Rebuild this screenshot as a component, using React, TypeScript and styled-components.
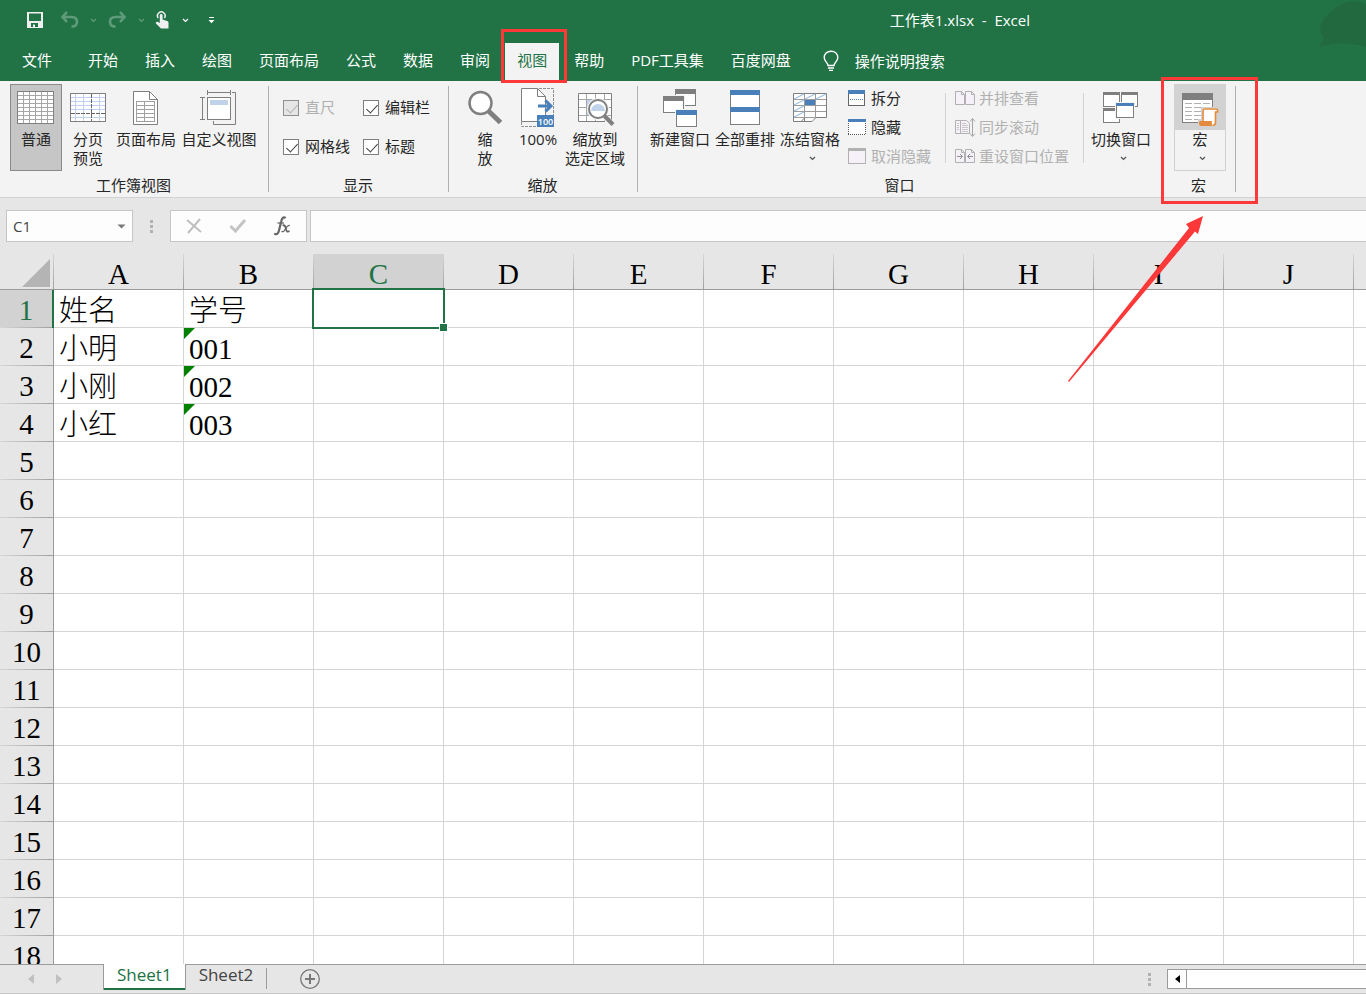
import React from "react";
import styled, { createGlobalStyle, css } from "styled-components";

const GREEN = "#217346";
const RED = "#fc3838";
const GRAY = "#7f7f7f";
const BLUE = "#4a80b9";
const PALE = "#c0d3ea";

const GlobalStyle = createGlobalStyle`
  * { box-sizing: border-box; }
  body {
    margin: 0;
    font-family: "Open Sans", "Noto Sans CJK SC", sans-serif;
    font-size: 15px;
    line-height: 19px;
    color: #262626;
  }
  button, input { font: inherit; color: inherit; }
  button { border: 0; padding: 0; background: none; }
  svg { display: block; flex: none; }
`;

const Window = styled.div`
  position: relative;
  display: flex;
  flex-direction: column;
  height: 100vh;
  overflow: hidden;
  background: #e6e6e6;
`;

/* ---------- title bar and tabs ---------- */

const Header = styled.header`
  position: relative;
  flex: none;
  background: ${GREEN};
  color: #fff;
`;

const TitleBar = styled.div`
  display: flex;
  align-items: center;
  height: 40px;
  padding-left: 24px;
`;

const QuickButton = styled.button<{ $w: number; $dim?: boolean }>`
  display: flex;
  align-items: center;
  justify-content: center;
  width: ${(p) => p.$w}px;
  height: 24px;
  opacity: ${(p) => (p.$dim ? 0.28 : 1)};
`;

const Title = styled.h1`
  margin: 0 336px 0 auto;
  font-size: 15px;
  font-weight: 400;
  white-space: pre;
`;

const Bubble = styled.svg`
  position: absolute;
  top: 0;
  right: 0;
`;

const Tabs = styled.nav`
  display: flex;
  align-items: flex-end;
  gap: 3px;
  height: 41px;
  padding-left: 10px;
`;

const Tab = styled.button<{ $active?: boolean; $file?: boolean }>`
  position: relative;
  height: 38px;
  padding: 0 12px 3px;
  white-space: nowrap;
  ${(p) => p.$file && css`margin-right: 9px;`}
  ${(p) => p.$active && css`background: #f3f3f3; color: ${GREEN};`}
`;

const TellMe = styled.button`
  display: flex;
  align-items: center;
  gap: 16px;
  height: 38px;
  margin-left: 17px;
  padding-bottom: 2px;
`;

const TabMark = styled.span`
  position: absolute;
  inset: -14px -8px -2px -4px;
  border: 3px solid ${RED};
  z-index: 3;
`;

/* ---------- ribbon ---------- */

const Ribbon = styled.div`
  display: flex;
  flex: none;
  height: 117px;
  padding-top: 3px;
  background: #f3f3f3;
  border-bottom: 1px solid #d2d2d2;
`;

const Group = styled.section<{ $w: number; $pad: number }>`
  position: relative;
  flex: none;
  width: ${(p) => p.$w}px;
  &::after {
    content: "";
    position: absolute;
    top: 2px;
    right: 0;
    width: 1px;
    height: 106px;
    background: #b1b1b1;
  }
  > div { padding-left: ${(p) => p.$pad}px; }
`;

const GroupBody = styled.div`
  display: flex;
  height: 87px;
`;

const GroupName = styled.h2`
  margin: 4px 0 0;
  padding-right: 2px;
  font-size: 15px;
  font-weight: 400;
  line-height: 20px;
  text-align: center;
`;

const BigButton = styled.button<{ $w: number; $state?: "on" | "hover" }>`
  display: flex;
  flex-direction: column;
  align-items: center;
  flex: none;
  width: ${(p) => p.$w}px;
  height: 87px;
  white-space: pre;
  ${(p) => p.$state === "on" && css`background: #c6c6c6; box-shadow: inset 0 0 0 1px #8a8a8a;`}
  ${(p) => p.$state === "hover" && css`box-shadow: inset 0 0 0 1px #d0d0d0;`}
`;

const IconSlot = styled.span<{ $shade?: boolean }>`
  display: flex;
  align-items: center;
  justify-content: center;
  width: 100%;
  height: 46px;
  background: ${(p) => (p.$shade ? "#d2d2d2" : "transparent")};
`;

const ChevronRow = styled.span`
  display: flex;
  align-items: center;
  height: 19px;
  padding-left: 4px;
`;

const Checks = styled.div`
  display: grid;
  grid-template-columns: 80px 1fr;
  grid-auto-rows: 39px;
  height: 87px;
  padding-top: 4px;
`;

const CheckLabel = styled.label<{ $off?: boolean }>`
  display: flex;
  align-items: center;
  gap: 6px;
  white-space: nowrap;
  color: ${(p) => (p.$off ? "#b1b1b1" : "inherit")};
`;

const CheckBox = styled.input`
  appearance: none;
  position: relative;
  width: 16px;
  height: 16px;
  margin: 0;
  border: 1px solid #7f7f7f;
  background: #fff;
  &::after {
    content: "";
    position: absolute;
    left: 5px;
    top: 1px;
    width: 5px;
    height: 10px;
    border: solid #404040;
    border-width: 0 1px 1px 0;
    transform: rotate(43deg);
  }
  &:disabled { background: #e6e6e6; border-color: #8f8f8f; }
  &:disabled::after { border-color: #b1b1b1; }
`;

const SmallColumn = styled.div<{ $w: number }>`
  flex: none;
  width: ${(p) => p.$w}px;
`;

const SmallButton = styled.button<{ $gap: number }>`
  display: flex;
  align-items: center;
  gap: ${(p) => p.$gap}px;
  height: 29px;
  white-space: nowrap;
  &:disabled { color: #b1b1b1; }
`;

const InnerRule = styled.span`
  flex: none;
  width: 1px;
  height: 70px;
  margin: 9px 9px 0 0;
  background: #d2d2d2;
`;

const MacroMark = styled.span`
  position: absolute;
  inset: -7px -22px -7px -2px;
  border: 3px solid ${RED};
  z-index: 3;
`;

/* ---------- formula bar ---------- */

const FormulaBar = styled.div`
  display: flex;
  align-items: center;
  flex: none;
  height: 56px;
  padding-left: 6px;
`;

const NameBox = styled.div`
  display: flex;
  align-items: center;
  width: 127px;
  height: 32px;
  padding-right: 6px;
  border: 1px solid #c6c6c6;
  background: #fdfdfd;
  color: #444;
  input {
    flex: 1;
    min-width: 0;
    padding: 0 0 0 6px;
    border: 0;
    background: none;
  }
`;

const Grip = styled.span`
  display: flex;
  flex-direction: column;
  gap: 2px;
  width: 3px;
  margin: 0 17px;
  i { height: 3px; background: #b1b1b1; }
`;

const FormulaTools = styled.div`
  display: flex;
  align-items: center;
  width: 137px;
  height: 32px;
  padding-left: 1px;
  border: 1px solid #c6c6c6;
  background: #fdfdfd;
  button { display: flex; justify-content: center; width: 44px; }
`;

const FormulaInput = styled.input`
  flex: 1;
  min-width: 0;
  height: 32px;
  margin-left: 3px;
  border: 1px solid #c6c6c6;
  border-right: 0;
  background: #fdfdfd;
`;

/* ---------- sheet ---------- */

const SheetArea = styled.main`
  flex: 1;
  min-height: 0;
  overflow: hidden;
  background: #fff;
`;

const Grid = styled.table`
  width: 100%;
  table-layout: fixed;
  border-collapse: separate;
  border-spacing: 0;
  font-family: "Liberation Serif", "Noto Sans CJK SC", serif;
  font-size: 29px;
  font-weight: 300;
  line-height: 32px;
  color: #000;
  th { font-weight: 400; }
`;

const ColHead = styled.th<{ $on?: boolean }>`
  height: 36px;
  padding: 5px 1px 0 0;
  border-bottom: 1px solid #9b9b9b;
  line-height: 30px;
  background: linear-gradient(#d6d6d6, #a0a0a0) right / 1px 100% no-repeat
    ${(p) => (p.$on ? "#d2d2d2" : "#e6e6e6")};
  color: ${(p) => (p.$on ? GREEN : "inherit")};
  &:last-child { background: #e6e6e6; }
`;

const Corner = styled(ColHead)`
  padding: 2px 4px 0 0;
  svg { margin-left: auto; }
`;

const RowHead = styled.th<{ $on?: boolean }>`
  height: 38px;
  padding: 2px 0 0;
  border-right: ${(p) => (p.$on ? `2px solid ${GREEN}` : "1px solid #9b9b9b")};
  background: linear-gradient(90deg, #d6d6d6, #a0a0a0) bottom / 100% 1px no-repeat
    ${(p) => (p.$on ? "#d2d2d2" : "#e6e6e6")};
  color: ${(p) => (p.$on ? GREEN : "inherit")};
`;

const Cell = styled.td<{ $flag?: boolean }>`
  position: relative;
  height: 38px;
  padding: 5px 0 0 5px;
  border-right: 1px solid #d4d4d4;
  border-bottom: 1px solid #d4d4d4;
  white-space: nowrap;
  &:last-child { border-right: 0; }
  ${(p) => p.$flag && css`
    &::before {
      content: "";
      position: absolute;
      top: 0;
      left: 0;
      width: 11px;
      height: 11px;
      background: #008000;
      clip-path: polygon(0 0, 100% 0, 0 100%);
    }
  `}
`;

const Selection = styled.span`
  position: absolute;
  inset: -2px;
  border: 2px solid ${GREEN};
  z-index: 1;
  &::after {
    content: "";
    position: absolute;
    right: -5px;
    bottom: -5px;
    width: 7px;
    height: 7px;
    border: 1px solid #fff;
    background: ${GREEN};
  }
`;

/* ---------- sheet tabs ---------- */

const Footer = styled.footer`
  display: flex;
  flex: none;
  height: 30px;
  border-top: 1px solid #9b9b9b;
  border-bottom: 1px solid #c6c6c6;
`;

const SheetNav = styled.div`
  display: flex;
  align-items: center;
  gap: 22px;
  width: 103px;
  padding-left: 28px;
`;

const SheetTab = styled.button<{ $active?: boolean }>`
  height: 25px;
  padding: 0 13px 5px;
  font-size: 17px;
  line-height: 20px;
  color: #444;
  ${(p) => p.$active && css`
    height: 26px;
    margin-top: -1px;
    padding-bottom: 4px;
    border: solid #9b9b9b;
    border-width: 0 1px;
    box-shadow: inset 0 -2px 0 ${GREEN};
    background: #fff;
    color: ${GREEN};
  `}
`;

const TabRule = styled.span`
  width: 1px;
  height: 21px;
  margin-top: 3px;
  background: #9b9b9b;
`;

const AddSheet = styled.button`
  margin-left: 32px;
`;

const ScrollBar = styled.div`
  display: flex;
  align-items: center;
  width: 235px;
  margin-left: auto;
`;

const ScrollButton = styled.button`
  display: flex;
  align-items: center;
  justify-content: center;
  width: 20px;
  height: 20px;
  margin-left: -1px;
  border: 1px solid #9b9b9b;
  background: #fdfdfd;
`;

const ScrollThumb = styled.span`
  flex: 1;
  height: 20px;
  border: solid #9b9b9b;
  border-width: 1px 0;
  background: #fff;
`;

const PointerArrow = styled.svg`
  position: absolute;
  left: 1068px;
  top: 216px;
  z-index: 4;
  pointer-events: none;
`;

/* ---------- icons ---------- */

const Chevron = ({ color = "#555" }: { color?: string }) => (
  <svg width="7" height="5" viewBox="0 0 7 5"><path d="M1 1l2.5 2.4L6 1" fill="none" stroke={color} strokeWidth="1.3" /></svg>
);

const Icon40 = ({ children }: { children: React.ReactNode }) => (
  <svg width="40" height="40" viewBox="0 0 40 40" fill="none" aria-hidden="true" overflow="visible">{children}</svg>
);

const hv = (xs: number[], ys: number[], x1: number, x2: number, y1: number, y2: number) =>
  xs.map((x) => `M${x} ${y1}V${y2}`).join("") + ys.map((y) => `M${x1} ${y}H${x2}`).join("");

const NormalIcon = () => (
  <Icon40>
    <rect x="1.5" y="4.5" width="36" height="32" fill="#fff" stroke={GRAY} />
    <path d={hv([7.5, 13.5, 19.5, 25.5, 31.5], [8.5, 12.5, 16.5, 20.5, 24.5, 28.5, 32.5], 2, 37, 5, 36)} stroke="#a6a6a6" />
  </Icon40>
);

const BreakIcon = () => (
  <Icon40>
    <rect x="2.5" y="6.5" width="35" height="28" fill="#fff" stroke={GRAY} />
    <path d={hv([7.5, 15.5, 31.5], [10.5, 14.5, 18.5, 22.5, 30.5], 3, 37, 7, 34)} stroke={PALE} />
    <path d="M23.5 7V34M3 26.5H37" stroke="#666" strokeDasharray="4 1" />
  </Icon40>
);

const PageIcon = () => (
  <Icon40>
    <path d="M7.5 4.5H23.5L31.5 12.5V37.5H7.5Z" fill="#fff" stroke={GRAY} />
    <path d="M23.5 4.5V12.5H31.5" stroke={GRAY} />
    <path d={hv([10.5, 18.5, 28.5], [14.5, 18.5, 22.5, 26.5, 30.5, 34.5], 10, 29, 14, 35)} stroke="#a0a0a0" />
  </Icon40>
);

const CustomIcon = () => (
  <Icon40>
    <rect x="8.5" y="10.5" width="23" height="22" fill="#fff" stroke={GRAY} />
    <path d="M11 13H29V18H11Z" fill={PALE} />
    <path d="M8.5 3V8M31.5 3V8M8 5.5H32M1 10.5H6M1 32.5H6M3.5 10V33M33 5.5H36.5V37.5H14.5V34" stroke={GRAY} />
  </Icon40>
);

const ZoomIcon = () => (
  <Icon40>
    <circle cx="15.5" cy="16" r="11" fill="#fff" stroke={GRAY} strokeWidth="2.5" />
    <path d="M23.5 24L35.5 35.5" stroke={GRAY} strokeWidth="5" />
  </Icon40>
);

const Zoom100Icon = () => (
  <Icon40>
    <path d="M21 1.5H35.5V28M3.5 35V39.5H19" stroke="#8f8f8f" strokeDasharray="3 1" />
    <path d="M3.5 1.5H19.5L27.5 9.5V34.5H3.5Z" fill="#fff" stroke={GRAY} />
    <path d="M19.5 1.5V9.5H27.5" stroke={GRAY} />
    <path d="M20 19H33M27.5 13.5L33 19L27.5 24.5" stroke={BLUE} strokeWidth="3" />
    <path d="M19 28H36V40H19Z" fill={BLUE} />
    <text x="27.5" y="37.5" fontSize="9" fontWeight="600" fill="#fff" textAnchor="middle">100</text>
  </Icon40>
);

const ZoomSelIcon = () => (
  <Icon40>
    <path d="M3.5 6.5H36.5V34.5H3.5Z" fill="#fff" stroke={GRAY} />
    <path d={hv([11.5, 20.5, 29.5], [12.5, 20.5, 28.5], 4, 36, 7, 34)} stroke="#a6a6a6" />
    <path d="M12 13H29V28H12Z" fill={PALE} />
    <circle cx="23" cy="22" r="11" fill="#f3f3f3" />
    <path d="M28 31L32 28L40 36V40H33Z" fill="#f3f3f3" />
    <circle cx="23" cy="22" r="9" fill="#fff" stroke={GRAY} strokeWidth="2" />
    <path d="M16 24A7 7 0 1 1 30 24Z" fill={PALE} />
    <path d="M29.5 29L38 37.5" stroke={GRAY} strokeWidth="4" />
  </Icon40>
);

const Win = ({ x, y, w, h, c, bar = 5 }: { x: number; y: number; w: number; h: number; c: string; bar?: number }) => (
  <g>
    <rect x={x - 1} y={y - 1} width={w + 2} height={h + 2} fill="#f3f3f3" />
    <rect x={x + 0.5} y={y + 0.5} width={w - 1} height={h - 1} fill="#fff" stroke={GRAY} />
    <rect x={x} y={y} width={w} height={bar} fill={c} />
  </g>
);

const NewWindowIcon = () => (
  <Icon40>
    <Win x={15} y={2} w={21} h={17} c={GRAY} />
    <Win x={3} y={9} w={21} h={17} c={GRAY} />
    <Win x={16} y={23} w={21} h={17} c={BLUE} />
  </Icon40>
);

const ArrangeIcon = () => (
  <Icon40>
    <Win x={5} y={3} w={30} h={18} c={BLUE} />
    <rect x="5.5" y="20.5" width="29" height="17" fill="#fff" stroke={GRAY} />
    <path d="M5 20H35V25H5Z" fill={BLUE} />
  </Icon40>
);

const FreezeIcon = () => (
  <Icon40>
    <path d="M3.5 6.5H36.5V30.5H26L22 34.5H15L11 34.5H3.5Z" fill="#fff" stroke={GRAY} />
    <path d={hv([14.5, 25.5], [12.5, 18.5, 24.5], 4, 36, 7, 31) + "M4 30.5H26"} stroke="#9b9b9b" />
    <path d="M4 12L14 7M15 12L25 7M26 12L36 7M4 18L14 13M4 24L14 19M4 30L14 25" stroke="#9fc0e4" strokeWidth="1.3" />
    <path d="M15 13H25V18H15Z" fill={BLUE} />
    <path d="M11 34.5L14.5 31V34" stroke={GRAY} />
  </Icon40>
);

const SwitchIcon = () => (
  <Icon40>
    <Win x={2} y={5} w={17} h={15} c={GRAY} bar={3} />
    <Win x={20} y={5} w={17} h={15} c={GRAY} bar={3} />
    <Win x={2} y={21} w={17} h={15} c={GRAY} bar={3} />
    <Win x={15} y={16} w={18} h={15} c={BLUE} bar={3} />
  </Icon40>
);

const MacroIcon = () => (
  <Icon40>
    <rect x="2.5" y="6.5" width="30" height="29" fill="#fff" stroke={GRAY} />
    <path d="M2 6H33V13H2Z" fill={GRAY} />
    {[16.5, 20.5, 24.5, 28.5, 32.5].map((y) => (
      <path key={y} d={`M5 ${y}H12M14 ${y}H21M23 ${y}H30`} stroke="#b1b1b1" />
    ))}
    <path d="M21 20H39V39H18V32H21Z" fill="#d2d2d2" />
    <path d="M22.5 34V23C22.5 22 23 21.5 24 21.5H37V24H35.5V36C35.5 37.5 34.5 38.5 33 38.5H31V34Z" fill="#fff" />
    <path d="M23 34V23.5C23 22.3 23.4 22 24.5 22H36C37.6 22 37.8 23 37.6 25H35.5V35.5C35.5 37.6 34.8 38.2 33 38.2" stroke="#e48a3c" strokeWidth="1.6" />
    <path d="M20 34H32C31.5 35 31.5 37.5 33 39H21C18.5 38.5 18.6 34.8 20 34Z" fill="#e48a3c" />
  </Icon40>
);

const SmallSvg = ({ w, children }: { w: number; children: React.ReactNode }) => (
  <svg width={w} height="19" viewBox={`0 0 ${w} 19`} fill="none" aria-hidden="true" overflow="visible">{children}</svg>
);

const SplitIcon = () => (
  <SmallSvg w={18}>
    <rect x="0.5" y="1.5" width="16" height="15" fill="#fff" stroke="#666" />
    <path d="M0 1H17V5H0Z" fill={BLUE} />
    <path d="M2 10.5H16" stroke={BLUE} strokeDasharray="1 1" />
  </SmallSvg>
);
const HideIcon = () => (
  <SmallSvg w={18}>
    <path d="M0 1H18V17H0Z" fill="#fff" />
    <path d="M.5 5V17M17.5 5V17M0 16.5H18" stroke="#555" strokeDasharray="1 1" />
    <path d="M0 1H18V4H0Z" fill={BLUE} />
  </SmallSvg>
);
const UnhideIcon = () => (
  <SmallSvg w={18}>
    <rect x="0.5" y="1.5" width="17" height="15" fill="#f6f1f8" stroke="#b1b1b1" />
    <path d="M0 1H18V4H0Z" fill="#b1b1b1" />
  </SmallSvg>
);
const TwoPages = () => (
  <path d="M.5 2.5H6.5L9.5 5.5V15.5H.5ZM6.5 2.5V5.5H9.5M10.5 2.5H16.5L19.5 5.5V15.5H10.5ZM16.5 2.5V5.5H19.5" fill="#f6f1f8" stroke="#b1b1b1" />
);
const SideBySideIcon = () => <SmallSvg w={20}><TwoPages /></SmallSvg>;
const SyncIcon = () => (
  <SmallSvg w={20}>
    <path d="M.5 2.5H7.5V15.5H.5Z" fill="#f6f1f8" stroke="#b1b1b1" />
    <path d="M5.5 2.5H11.5L14.5 5.5V15.5H5.5Z" fill="#f6f1f8" stroke="#b1b1b1" />
    <path d="M2 5.5H4M2 7.5H4M2 9.5H4M2 11.5H4M7 5.5H11M7 7.5H13M7 9.5H13M7 11.5H13M7 13.5H13" stroke="#c8c4ca" />
    <path d="M17.5 1V18M15 3.5L17.5 .5L20 3.5M15 15.5L17.5 18.5L20 15.5" stroke="#a6a6a6" />
  </SmallSvg>
);
const ResetIcon = () => (
  <SmallSvg w={20}>
    <TwoPages />
    <path d="M2 9.5H7M5 7L7.5 9.5L5 12M18 9.5H13M15 7L12.5 9.5L15 12" stroke="#8f8f8f" />
  </SmallSvg>
);

const UndoIcon = ({ flip }: { flip?: boolean }) => (
  <svg width="20" height="18" viewBox="0 0 20 18" fill="none" stroke="#fff" strokeWidth="2.6">
    <path
      transform={flip ? "translate(20 0) scale(-1 1)" : undefined}
      d="M7 1L2.5 6L7 11M3 6H11.5C15 6 17 8 17 10.7C17 13.7 15 15.6 11.5 15.6"
    />
  </svg>
);

/* ---------- data ---------- */

const columns = ["A", "B", "C", "D", "E", "F", "G", "H", "I", "J"];
const data: Record<number, [string, string]> = {
  1: ["姓名", "学号"],
  2: ["小明", "001"],
  3: ["小刚", "002"],
  4: ["小红", "003"],
};
const rows = Array.from({ length: 18 }, (_, i) => i + 1);
const tabsBefore = ["开始", "插入", "绘图", "页面布局", "公式", "数据", "审阅"];
const tabsAfter = ["帮助", "PDF工具集", "百度网盘"];

type BigProps = {
  w: number;
  icon: React.ReactNode;
  text: string;
  menu?: boolean;
  state?: "on" | "hover";
};

const Big = ({ w, icon, text, menu, state }: BigProps) => (
  <BigButton type="button" $w={w} $state={state}>
    <IconSlot $shade={state === "hover"}>{icon}</IconSlot>
    {text}
    {menu && <ChevronRow><Chevron /></ChevronRow>}
  </BigButton>
);

const Check = ({ text, off }: { text: string; off?: boolean }) => (
  <CheckLabel $off={off}>
    <CheckBox type="checkbox" defaultChecked disabled={off} />
    {text}
  </CheckLabel>
);

const Small = ({ icon, text, off, gap }: { icon: React.ReactNode; text: string; off?: boolean; gap: number }) => (
  <SmallButton type="button" disabled={off} $gap={gap}>{icon}{text}</SmallButton>
);

const WindowTools = styled(GroupBody)`
  ${SmallColumn}:nth-of-type(1) { margin-left: 6px; }
`;

export default function App() {
  return (
    <Window>
      <GlobalStyle />
      <Header>
        <Bubble width="60" height="60" viewBox="0 0 60 60" aria-hidden="true">
          <path d="M60 4C54 1 44 0 36 4C22 11 7 28 18 37C17 41 15 44 13 48C24 42 42 42 60 47Z" fill="#22693f" />
        </Bubble>
        <TitleBar>
          <QuickButton type="button" aria-label="保存" $w={22}>
            <svg width="16" height="16" viewBox="0 0 16 16">
              <path fillRule="evenodd" fill="#f0f0f0" d="M0 0H16V16H0ZM2 1.6V9H14V1.6ZM4 11V15H6V12.6H8V15H11V11Z" />
            </svg>
          </QuickButton>
          <QuickButton type="button" aria-label="撤消" $w={47} $dim>
            <UndoIcon />
          </QuickButton>
          <QuickButton type="button" aria-label="撤消选项" $w={0} $dim><Chevron color="#fff" /></QuickButton>
          <QuickButton type="button" aria-label="恢复" $w={48} $dim>
            <UndoIcon flip />
          </QuickButton>
          <QuickButton type="button" aria-label="恢复选项" $w={0} $dim><Chevron color="#fff" /></QuickButton>
          <QuickButton type="button" aria-label="触摸/鼠标模式" $w={41}>
            <svg width="14" height="18" viewBox="0 0 14 18">
              <path d="M3.2 7A3.8 3.8 0 1 1 9.4 7" fill="none" stroke="#f0f0f0" strokeWidth="1.5" />
              <path d="M4.8 4.5C4.8 2.6 7.6 2.6 7.6 4.5V8.5L12 10C13.2 10.4 13.5 11 13.5 12V17.5H6L1 12.4C.3 11.5 1.6 10 3 11L4.8 12Z" fill="#f0f0f0" />
            </svg>
          </QuickButton>
          <QuickButton type="button" aria-label="模式选项" $w={7}><Chevron color="#fff" /></QuickButton>
          <QuickButton type="button" aria-label="自定义快速访问工具栏" $w={45}>
            <svg width="7" height="8" viewBox="0 0 7 8"><path d="M1 1H6V2H1ZM0.5 4H6.5L3.5 7.2Z" fill="#fff" /></svg>
          </QuickButton>
          <Title>{"工作表1.xlsx  -  Excel"}</Title>
        </TitleBar>
        <Tabs>
          <Tab type="button" $file>文件</Tab>
          {tabsBefore.map((t) => <Tab type="button" key={t}>{t}</Tab>)}
          <Tab type="button" $active>视图<TabMark /></Tab>
          {tabsAfter.map((t) => <Tab type="button" key={t}>{t}</Tab>)}
          <TellMe type="button">
            <svg width="16" height="22" viewBox="0 0 16 22" fill="none" stroke="#fff" strokeWidth="1.4">
              <path d="M5 15.5C5 12.5 1.2 11.5 1.2 7.6C1.2 3.8 4 1.2 8 1.2S14.8 3.8 14.8 7.6C14.8 11.5 11 12.5 11 15.5ZM5 18H11M6 20.4H10" />
            </svg>
            操作说明搜索
          </TellMe>
        </Tabs>
      </Header>

      <Ribbon>
        <Group $w={269} $pad={10}>
          <GroupBody>
            <Big w={52} icon={<NormalIcon />} text="普通" state="on" />
            <Big w={52} icon={<BreakIcon />} text={"分页\n预览"} />
            <Big w={64} icon={<PageIcon />} text="页面布局" />
            <Big w={82} icon={<CustomIcon />} text="自定义视图" />
          </GroupBody>
          <GroupName>工作簿视图</GroupName>
        </Group>
        <Group $w={180} $pad={14}>
          <Checks>
            <Check text="直尺" off />
            <Check text="编辑栏" />
            <Check text="网格线" />
            <Check text="标题" />
          </Checks>
          <GroupName>显示</GroupName>
        </Group>
        <Group $w={189} $pad={9}>
          <GroupBody>
            <Big w={54} icon={<ZoomIcon />} text={"缩\n放"} />
            <Big w={52} icon={<Zoom100Icon />} text="100%" />
            <Big w={62} icon={<ZoomSelIcon />} text={"缩放到\n选定区域"} />
          </GroupBody>
          <GroupName>缩放</GroupName>
        </Group>
        <Group $w={525} $pad={10}>
          <WindowTools>
            <Big w={64} icon={<NewWindowIcon />} text="新建窗口" />
            <Big w={66} icon={<ArrangeIcon />} text="全部重排" />
            <Big w={64} icon={<FreezeIcon />} text="冻结窗格" menu />
            <SmallColumn $w={97}>
              <Small gap={5} icon={<SplitIcon />} text="拆分" />
              <Small gap={5} icon={<HideIcon />} text="隐藏" />
              <Small gap={5} icon={<UnhideIcon />} text="取消隐藏" off />
            </SmallColumn>
            <InnerRule />
            <SmallColumn $w={128}>
              <Small gap={4} icon={<SideBySideIcon />} text="并排查看" off />
              <Small gap={4} icon={<SyncIcon />} text="同步滚动" off />
              <Small gap={4} icon={<ResetIcon />} text="重设窗口位置" off />
            </SmallColumn>
            <InnerRule />
            <Big w={56} icon={<SwitchIcon />} text="切换窗口" menu />
          </WindowTools>
          <GroupName>窗口</GroupName>
        </Group>
        <Group $w={73} $pad={11}>
          <GroupBody>
            <Big w={52} icon={<MacroIcon />} text="宏" menu state="hover" />
          </GroupBody>
          <GroupName>宏</GroupName>
          <MacroMark />
        </Group>
      </Ribbon>

      <FormulaBar>
        <NameBox>
          <input aria-label="名称框" defaultValue="C1" />
          <svg width="9" height="5" viewBox="0 0 9 5"><path d="M.5 .5H8.5L4.5 4.5Z" fill="#777" /></svg>
        </NameBox>
        <Grip><i /><i /><i /></Grip>
        <FormulaTools>
          <button type="button" aria-label="取消">
            <svg width="16" height="16" viewBox="0 0 16 16"><path d="M1 2L15 14M14 1L2 15" stroke="#bfbfbf" strokeWidth="2" /></svg>
          </button>
          <button type="button" aria-label="输入">
            <svg width="18" height="16" viewBox="0 0 18 16"><path d="M1.5 8L6.5 13L16 2" fill="none" stroke="#c4c4c4" strokeWidth="3" /></svg>
          </button>
          <button type="button" aria-label="插入函数">
            <svg width="18" height="22" viewBox="0 0 18 22" fill="none" stroke="#666">
              <path d="M12.5 3.2C10.5 1 8.8 3.4 8.2 6.5L6 15.5C5.3 18.8 3.4 20 1.2 18.6" strokeWidth="2.2" />
              <path d="M4.5 8H11" strokeWidth="1.3" />
              <path d="M9.5 10.5C12 9.5 12.6 12 13 14C13.4 16.3 14.4 17.4 16.5 16" strokeWidth="1.8" />
              <path d="M16.8 10.5C14.5 10 13 13 12 14.5C11 16.5 10 17.2 8.5 16.4" strokeWidth="1.2" />
            </svg>
          </button>
        </FormulaTools>
        <FormulaInput aria-label="编辑栏" />
      </FormulaBar>

      <SheetArea>
        <Grid>
          <colgroup>
            <col width="54" />
            {columns.map((c) => <col key={c} width="130" />)}
            <col />
          </colgroup>
          <thead>
            <tr>
              <Corner>
                <svg width="28" height="28" viewBox="0 0 28 28"><path d="M28 0V28H0Z" fill="#b4b4b4" /></svg>
              </Corner>
              {columns.map((c) => <ColHead key={c} scope="col" $on={c === "C"}>{c}</ColHead>)}
              <ColHead />
            </tr>
          </thead>
          <tbody>
            {rows.map((r) => (
              <tr key={r}>
                <RowHead scope="row" $on={r === 1}>{r}</RowHead>
                {columns.map((c, i) => (
                  <Cell key={c} $flag={c === "B" && r > 1 && r < 5}>
                    {data[r]?.[i]}
                    {c === "C" && r === 1 && <Selection />}
                  </Cell>
                ))}
                <Cell />
              </tr>
            ))}
          </tbody>
        </Grid>
      </SheetArea>

      <Footer>
        <SheetNav>
          <svg width="6" height="10" viewBox="0 0 6 10"><path d="M6 0V10L0 5Z" fill="#c0c0c0" /></svg>
          <svg width="6" height="10" viewBox="0 0 6 10"><path d="M0 0V10L6 5Z" fill="#c0c0c0" /></svg>
        </SheetNav>
        <SheetTab type="button" $active>Sheet1</SheetTab>
        <SheetTab type="button">Sheet2</SheetTab>
        <TabRule />
        <AddSheet type="button" aria-label="新工作表">
          <svg width="22" height="22" viewBox="0 0 22 22" fill="none" stroke="#777">
            <circle cx="11" cy="11" r="9.3" strokeWidth="1.3" />
            <path d="M11 6V16M6 11H16" strokeWidth="2" />
          </svg>
        </AddSheet>
        <ScrollBar>
          <Grip><i /><i /><i /></Grip>
          <ScrollButton type="button" aria-label="向左滚动">
            <svg width="5" height="8" viewBox="0 0 5 8"><path d="M5 0V8L0 4Z" fill="#000" /></svg>
          </ScrollButton>
          <ScrollThumb />
        </ScrollBar>
      </Footer>

      <PointerArrow width="136" height="166" viewBox="0 0 136 166" aria-hidden="true">
        <path d="M0 165L121 12L118 8L135 0L130 18L127 15.5L1 166Z" fill={RED} />
      </PointerArrow>
    </Window>
  );
}
